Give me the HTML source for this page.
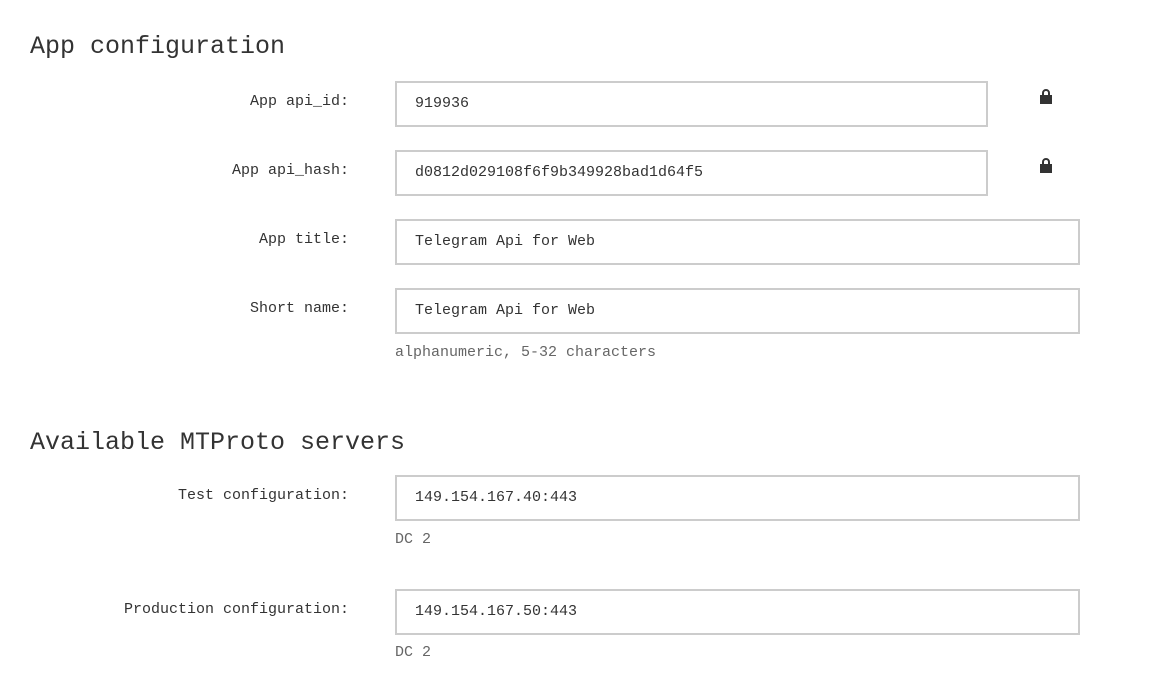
<!DOCTYPE html>
<html><head><meta charset="utf-8"><style>
body{margin:0;width:1172px;height:684px;background:#fff;font-family:"Liberation Mono","DejaVu Sans Mono",monospace;color:#333;position:relative;overflow:hidden}
.h{position:absolute;left:30px;font-size:25px;line-height:30px;white-space:nowrap}
.l{position:absolute;right:823px;font-size:15px;line-height:20px;white-space:nowrap;text-align:right}
.i{position:absolute;left:395px;height:42px;border:2px solid #ccc;box-sizing:border-box;height:46px;font-size:15px;line-height:42px;padding-left:18px;white-space:nowrap}
.s{position:absolute;left:395px;font-size:15px;line-height:20px;color:#666;white-space:nowrap}
.lock{position:absolute;left:1038px;width:16px;height:16px}
</style></head><body>
<div class="h" style="top:32px">App configuration</div>
<div class="l" style="top:92px">App api_id:</div>
<div class="i" style="top:81px;width:593px">919936</div>
<svg class="lock" style="top:88px" viewBox="0 0 16 16"><path d="M4 8V5a4 4 0 0 1 8 0v3h-2V5a2 2 0 0 0-4 0v3z" fill="#333"/><rect x="2" y="7" width="12" height="9" fill="#333"/></svg>
<div class="l" style="top:161px">App api_hash:</div>
<div class="i" style="top:150px;width:593px">d0812d029108f6f9b349928bad1d64f5</div>
<svg class="lock" style="top:157px" viewBox="0 0 16 16"><path d="M4 8V5a4 4 0 0 1 8 0v3h-2V5a2 2 0 0 0-4 0v3z" fill="#333"/><rect x="2" y="7" width="12" height="9" fill="#333"/></svg>
<div class="l" style="top:230px">App title:</div>
<div class="i" style="top:219px;width:685px">Telegram Api for Web</div>
<div class="l" style="top:299px">Short name:</div>
<div class="i" style="top:288px;width:685px">Telegram Api for Web</div>
<div class="s" style="top:343px">alphanumeric, 5-32 characters</div>
<div class="h" style="top:428px">Available MTProto servers</div>
<div class="l" style="top:486px">Test configuration:</div>
<div class="i" style="top:475px;width:685px">149.154.167.40:443</div>
<div class="s" style="top:530px">DC 2</div>
<div class="l" style="top:600px">Production configuration:</div>
<div class="i" style="top:589px;width:685px">149.154.167.50:443</div>
<div class="s" style="top:643px">DC 2</div>
</body></html>
